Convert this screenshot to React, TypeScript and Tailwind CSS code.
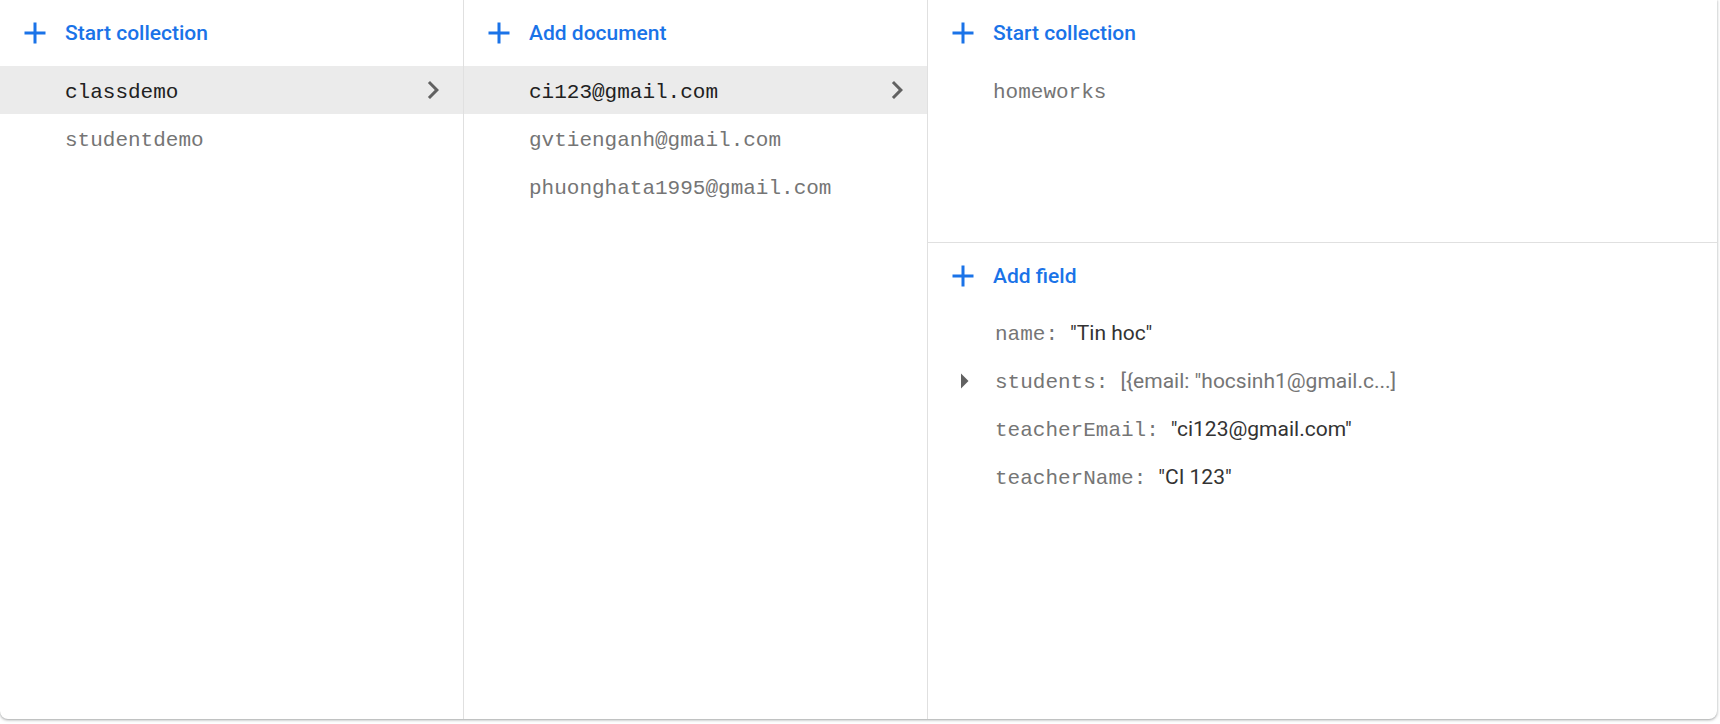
import React from 'react';

const mono = { fontFamily: '"Liberation Mono", "DejaVu Sans Mono", monospace' };

function PlusIcon() {
  return (
    <svg viewBox="0 0 24 24" className="w-9 h-9 fill-[#1a73e8] shrink-0">
      <path d="M19 13h-6v6h-2v-6H5v-2h6V5h2v6h6v2z" />
    </svg>
  );
}

function Chevron() {
  return (
    <svg viewBox="0 0 24 24" className="w-9 h-9 fill-[#616161] shrink-0">
      <path d="M10 6L8.59 7.41 13.17 12l-4.58 4.59L10 18l6-6z" />
    </svg>
  );
}

function Caret() {
  return (
    <svg viewBox="0 0 24 24" className="w-9 h-9 fill-[#616161] shrink-0">
      <path d="M10 17l5-5-5-5v10z" />
    </svg>
  );
}

function ActionHeader({ label }: { label: string }) {
  return (
    <div className="h-[66px] flex items-center pl-[17px]">
      <PlusIcon />
      <span className="ml-[12px] pt-[1px] text-[21px] font-medium text-[#1a73e8]">{label}</span>
    </div>
  );
}

function ListRow({ label, selected }: { label: string; selected?: boolean }) {
  return (
    <div className={`h-12 flex items-center justify-between pl-[65px] pr-3 ${selected ? 'bg-[#ebebeb]' : ''}`}>
      <span className={`pt-[6px] text-[21px] ${selected ? 'text-[#212121]' : 'text-[#757575]'}`} style={mono}>
        {label}
      </span>
      {selected && <Chevron />}
    </div>
  );
}

const fields = [
  { key: 'name', value: '"Tin hoc"' },
  { key: 'students', value: '[{email: "hocsinh1@gmail.c...]', expandable: true },
  { key: 'teacherEmail', value: '"ci123@gmail.com"' },
  { key: 'teacherName', value: '"CI 123"' },
];

export default function App() {
  return (
    <div className="w-[1720px] h-[724px] bg-white" style={{ fontFamily: 'Roboto, "Noto Sans", sans-serif' }}>
      <div className="w-[1717px] h-[719px] flex bg-white rounded-b-[8px] shadow-[0_1px_2px_0_rgba(60,64,67,0.3),0_1px_3px_1px_rgba(60,64,67,0.15)] overflow-hidden">
        <div className="w-[464px] border-r border-[#e0e0e0]">
          <ActionHeader label="Start collection" />
          <ListRow label="classdemo" selected />
          <ListRow label="studentdemo" />
        </div>

        <div className="w-[464px] border-r border-[#e0e0e0]">
          <ActionHeader label="Add document" />
          <ListRow label="ci123@gmail.com" selected />
          <ListRow label="gvtienganh@gmail.com" />
          <ListRow label="phuonghata1995@gmail.com" />
        </div>

        <div className="flex-1 flex flex-col">
          <div className="h-[243px] border-b border-[#e0e0e0]">
            <ActionHeader label="Start collection" />
            <ListRow label="homeworks" />
          </div>
          <div>
            <ActionHeader label="Add field" />
            {fields.map((f) => (
              <div key={f.key} className="h-12 flex items-center pl-[18px]">
                {f.expandable ? <Caret /> : <div className="w-9 h-9 shrink-0" />}
                <span className="ml-[13px] pt-[4px] text-[21px] text-[#757575]" style={mono}>
                  {f.key}:
                </span>
                <span
                  className={`ml-3 pt-[2px] text-[21px] ${f.expandable ? 'text-[#757575]' : 'text-[#333333]'}`}
                >
                  {f.value}
                </span>
              </div>
            ))}
          </div>
        </div>
      </div>
    </div>
  );
}
